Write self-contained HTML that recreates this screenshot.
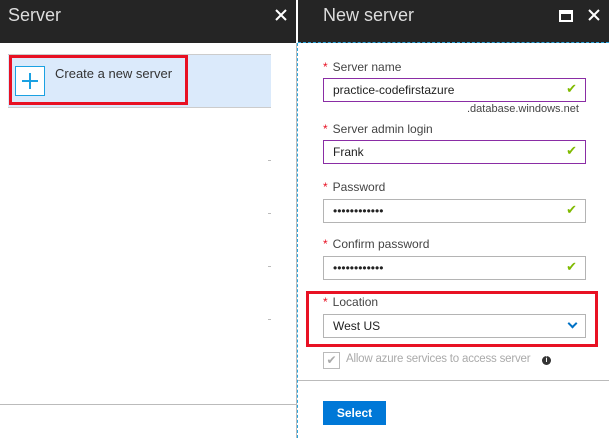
<!DOCTYPE html>
<html><head><style>
*{margin:0;padding:0;box-sizing:border-box}
body{width:609px;height:438px;position:relative;background:#fff;font-family:"Segoe UI","Liberation Sans",sans-serif;overflow:hidden}
.a{position:absolute}
.hdr{background:#252525;height:43px;top:0}
.lbl{font-size:12px;color:#444}
.lbl b{color:#e81123;font-weight:normal;margin-right:5px}
.inp{left:323px;width:263px;height:24px;border:1px solid #8a2da5;font-size:12px;color:#222;padding:4px 0 0 9px}
.inp.g{border-color:#b4b4b4}
.ck{right:8px;top:2px;color:#7fba00;font-size:13px}
.dash{left:268px;width:3px;height:1px;background:#bbb}
</style></head><body>
<div class="a hdr" style="left:0;width:296px"></div>
<div class="a" style="left:8px;top:5px;color:#ddd;font-size:18px">Server</div>
<svg class="a" style="left:275px;top:9px" width="12" height="12"><path d="M1 1L11 11M11 1L1 11" stroke="#fff" stroke-width="2"/></svg>
<div class="a hdr" style="left:298px;width:311px"></div>
<div class="a" style="left:323px;top:5px;color:#ddd;font-size:18px">New server</div>
<div class="a" style="left:559px;top:10px;width:14px;height:12px;border:2px solid #fff;border-top-width:4px"></div>
<svg class="a" style="left:588px;top:9px" width="12" height="12"><path d="M1 1L11 11M11 1L1 11" stroke="#fff" stroke-width="2"/></svg>
<div class="a" style="left:298px;top:42px;width:311px;border-top:1px dashed #2aa5dd"></div>
<div class="a" style="left:296px;top:43px;width:1px;height:395px;background:#bbb"></div>
<div class="a" style="left:297px;top:43px;height:395px;border-left:1px dashed #2aa5dd"></div>

<div class="a" style="left:8px;top:54px;width:263px;height:54px;background:#dbeafb;border-top:1px solid #ccc;border-bottom:1px solid #ccc"></div>
<div class="a" style="left:9px;top:55px;width:179px;height:50px;border:3px solid #e81123"></div>
<div class="a" style="left:15px;top:66px;width:30px;height:30px;border:1px solid #1ba1e2;background:#fff"></div>
<div class="a" style="left:22px;top:80px;width:16px;height:2px;background:#1ba1e2"></div>
<div class="a" style="left:29px;top:73px;width:2px;height:16px;background:#1ba1e2"></div>
<div class="a" style="left:55px;top:66px;font-size:13px;color:#333">Create a new server</div>
<div class="a dash" style="top:160px"></div><div class="a dash" style="top:213px"></div><div class="a dash" style="top:266px"></div><div class="a dash" style="top:319px"></div>
<div class="a" style="left:0;top:404px;width:296px;height:1px;background:#bbb"></div>

<div class="a lbl" style="left:323px;top:60px"><b>*</b>Server name</div>
<div class="a inp" style="top:78px">practice-codefirstazure<span class="a ck">✔</span></div>
<div class="a" style="left:467px;top:103px;font-size:11px;color:#444">.database.windows.net</div>
<div class="a lbl" style="left:323px;top:122px"><b>*</b>Server admin login</div>
<div class="a inp" style="top:140px">Frank<span class="a ck">✔</span></div>
<div class="a lbl" style="left:323px;top:180px"><b>*</b>Password</div>
<div class="a inp g" style="top:199px">••••••••••••<span class="a ck">✔</span></div>
<div class="a lbl" style="left:323px;top:237px"><b>*</b>Confirm password</div>
<div class="a inp g" style="top:256px">••••••••••••<span class="a ck">✔</span></div>
<div class="a" style="left:306px;top:291px;width:292px;height:56px;border:3px solid #e81123"></div>
<div class="a lbl" style="left:323px;top:295px"><b>*</b>Location</div>
<div class="a inp g" style="top:314px">West US<span class="a" style="right:9px;top:5px;width:7px;height:7px;border-right:2px solid #0072c6;border-bottom:2px solid #0072c6;transform:rotate(45deg)"></span></div>
<div class="a" style="left:323px;top:352px;width:17px;height:17px;border:1px solid #bbb;color:#aaa;font-size:12px;text-align:center;line-height:15px">✔</div>
<div class="a" style="left:346px;top:353px;font-size:11.5px;color:#aaa;letter-spacing:-0.2px">Allow azure services to access server</div>
<div class="a" style="left:542px;top:356px;width:9px;height:9px;border-radius:50%;background:#333;color:#fff;font-size:7px;text-align:center;line-height:9px;font-weight:bold">i</div>
<div class="a" style="left:298px;top:380px;width:311px;height:1px;background:#bbb"></div>
<div class="a" style="left:323px;top:401px;width:63px;height:24px;background:#0078d7;color:#fff;font-size:12px;font-weight:bold;text-align:center;line-height:24px">Select</div>
</body></html>
